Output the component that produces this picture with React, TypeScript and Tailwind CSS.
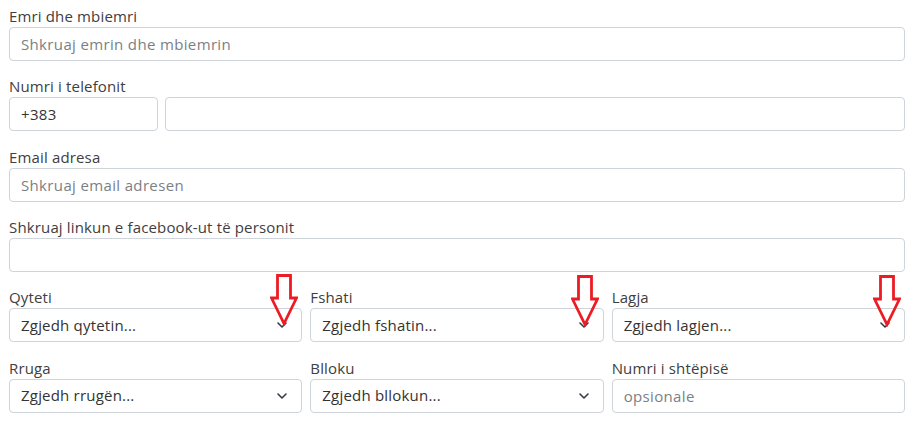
import React from "react";

const font = { fontFamily: '"Open Sans", "Liberation Sans", sans-serif' };

function Label({ children }: { children: React.ReactNode }) {
  return <div className="text-[15px] leading-[21px] text-[#404040] tracking-[0.15px]">{children}</div>;
}

function TextInput({ placeholder, value }: { placeholder?: string; value?: string }) {
  return (
    <input
      readOnly
      defaultValue={value}
      placeholder={placeholder}
      className="w-full h-[34px] rounded-[4px] border border-[#ced4da] bg-white px-[11px] text-[15px] text-[#333] tracking-[0.35px] placeholder:text-[#7b7f85] outline-none"
      style={font}
    />
  );
}

function Chevron() {
  return (
    <svg width="10" height="6" viewBox="0 0 10 6" fill="none" className="shrink-0">
      <path d="M1 1l4 4 4-4" stroke="#343a40" strokeWidth="1.6" strokeLinecap="round" strokeLinejoin="round" />
    </svg>
  );
}

function Select({ text }: { text: string }) {
  return (
    <div className="w-full h-[34px] rounded-[4px] border border-[#ced4da] bg-white pl-[11px] pr-[14px] flex items-center justify-between text-[15px] text-[#333] tracking-[0.2px]">
      <span>{text}</span>
      <Chevron />
    </div>
  );
}

function RedArrow() {
  return (
    <svg width="28" height="52" viewBox="0 0 28 52" fill="none">
      <path
        d="M7.5 1.5 H20.5 V24 H26.5 L14 49.5 L1.5 24 H7.5 Z"
        stroke="#ed1c24"
        strokeWidth="2.8"
        strokeLinejoin="miter"
        fill="none"
      />
    </svg>
  );
}

function Field({ label, children }: { label: string; children: React.ReactNode }) {
  return (
    <div className="flex flex-col">
      <Label>{label}</Label>
      {children}
    </div>
  );
}

export default function App() {
  return (
    <div className="w-[918px] h-[431px] bg-white overflow-hidden relative" style={font}>
      <div className="px-[9px] pt-[6px] pr-[13px] flex flex-col gap-[15.33px]">
        <Field label="Emri dhe mbiemri">
          <TextInput placeholder="Shkruaj emrin dhe mbiemrin" />
        </Field>
        <Field label="Numri i telefonit">
          <div className="flex gap-[7px]">
            <div className="w-[149px] shrink-0">
              <TextInput value="+383" />
            </div>
            <TextInput />
          </div>
        </Field>
        <Field label="Email adresa">
          <TextInput placeholder="Shkruaj email adresen" />
        </Field>
        <Field label="Shkruaj linkun e facebook-ut të personit">
          <TextInput />
        </Field>
        <div className="grid grid-cols-3 gap-x-[8px] gap-y-[15.33px]">
          <Field label="Qyteti">
            <Select text="Zgjedh qytetin..." />
          </Field>
          <Field label="Fshati">
            <Select text="Zgjedh fshatin..." />
          </Field>
          <Field label="Lagja">
            <Select text="Zgjedh lagjen..." />
          </Field>
          <Field label="Rruga">
            <Select text="Zgjedh rrugën..." />
          </Field>
          <Field label="Blloku">
            <Select text="Zgjedh bllokun..." />
          </Field>
          <Field label="Numri i shtëpisë">
            <TextInput placeholder="opsionale" />
          </Field>
        </div>
      </div>
      <div className="absolute left-[270px] top-[274px]">
        <RedArrow />
      </div>
      <div className="absolute left-[571px] top-[275px]">
        <RedArrow />
      </div>
      <div className="absolute left-[873px] top-[275px]">
        <RedArrow />
      </div>
    </div>
  );
}
